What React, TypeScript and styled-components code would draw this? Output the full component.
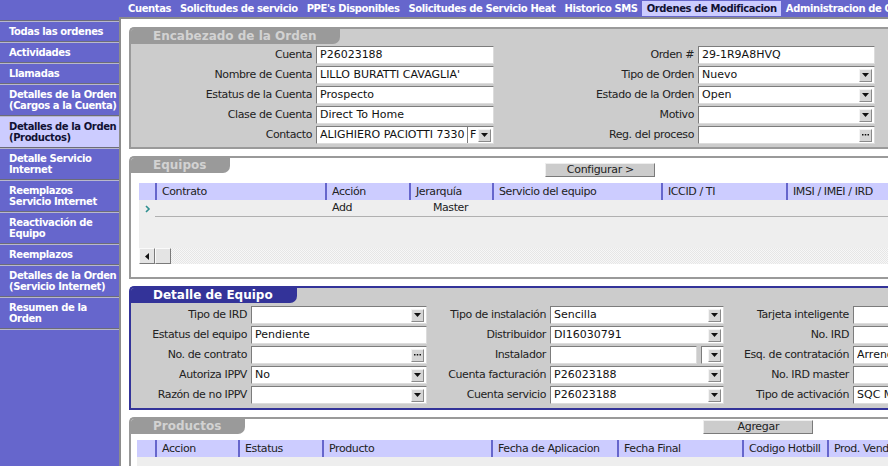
import React from "react";
import styled, { createGlobalStyle } from "styled-components";

const GlobalStyle = createGlobalStyle`
  html, body {
    margin: 0;
    padding: 0;
  }
  body {
    width: 888px;
    height: 466px;
    overflow: hidden;
    background: #6666cc;
    font-family: "DejaVu Sans", Verdana, sans-serif;
  }
`;

type FieldKind = "text" | "select" | "dots" | "contact" | "split";

interface FormField {
  label: string;
  value?: string;
  kind: FieldKind;
}

const navItems = [
  "Cuentas",
  "Solicitudes de servicio",
  "PPE's Disponibles",
  "Solicitudes de Servicio Heat",
  "Historico SMS",
  "Ordenes de Modificacion",
  "Administracion de Ordenes"
];

const sideItems = [
  ["Todas las ordenes"],
  ["Actividades"],
  ["Llamadas"],
  ["Detalles de la Orden", "(Cargos a la Cuenta)"],
  ["Detalles de la Orden", "(Productos)"],
  ["Detalle Servicio", "Internet"],
  ["Reemplazos", "Servicio Internet"],
  ["Reactivación de", "Equipo"],
  ["Reemplazos"],
  ["Detalles de la Orden", "(Servicio Internet)"],
  ["Resumen de la", "Orden"]
];

const headerRows: FormField[][] = [
  [
    { label: "Cuenta", value: "P26023188", kind: "text" },
    { label: "Orden #", value: "29-1R9A8HVQ", kind: "text" }
  ],
  [
    { label: "Nombre de Cuenta", value: "LILLO BURATTI CAVAGLIA'", kind: "text" },
    { label: "Tipo de Orden", value: "Nuevo", kind: "select" }
  ],
  [
    { label: "Estatus de la Cuenta", value: "Prospecto", kind: "text" },
    { label: "Estado de la Orden", value: "Open", kind: "select" }
  ],
  [
    { label: "Clase de Cuenta", value: "Direct To Home", kind: "text" },
    { label: "Motivo", kind: "select" }
  ],
  [
    { label: "Contacto", value: "ALIGHIERO PACIOTTI 7330", kind: "contact" },
    { label: "Reg. del proceso", kind: "dots" }
  ]
];

const detailRows: FormField[][] = [
  [
    { label: "Tipo de IRD", kind: "select" },
    { label: "Tipo de instalación", value: "Sencilla", kind: "select" },
    { label: "Tarjeta inteligente", kind: "text" }
  ],
  [
    { label: "Estatus del equipo", value: "Pendiente", kind: "text" },
    { label: "Distribuidor", value: "DI16030791", kind: "select" },
    { label: "No. IRD", kind: "text" }
  ],
  [
    { label: "No. de contrato", kind: "dots" },
    { label: "Instalador", kind: "split" },
    { label: "Esq. de contratación", value: "Arrendamiento", kind: "text" }
  ],
  [
    { label: "Autoriza IPPV", value: "No", kind: "select" },
    { label: "Cuenta facturación", value: "P26023188", kind: "select" },
    { label: "No. IRD master", kind: "text" }
  ],
  [
    { label: "Razón de no IPPV", kind: "select" },
    { label: "Cuenta servicio", value: "P26023188", kind: "select" },
    { label: "Tipo de activación", value: "SQC Masivo", kind: "text" }
  ]
];

const equipoCols = [
  { title: "Contrato", width: 170 },
  { title: "Acción", width: 84 },
  { title: "Jerarquía", width: 83 },
  { title: "Servicio del equipo", width: 169 },
  { title: "ICCID / TI", width: 125 },
  { title: "IMSI / IMEI / IRD", width: 200 }
];

const productoCols = [
  { title: "Accion", width: 83 },
  { title: "Estatus", width: 84 },
  { title: "Producto", width: 169 },
  { title: "Fecha de Aplicacion", width: 126 },
  { title: "Fecha Final", width: 125 },
  { title: "Codigo Hotbill", width: 85 },
  { title: "Prod. Vendido", width: 120 }
];

const Arrow: React.FC = () => (
  <svg width="7" height="4" viewBox="0 0 7 4">
    <polygon points="0,0 7,0 3.5,4" fill="#111" />
  </svg>
);

const Dots: React.FC = () => (
  <svg width="7" height="2" viewBox="0 0 7 2">
    <rect x="0" y="0" width="1.5" height="1.5" fill="#111" />
    <rect x="2.75" y="0" width="1.5" height="1.5" fill="#111" />
    <rect x="5.5" y="0" width="1.5" height="1.5" fill="#111" />
  </svg>
);

const FieldBox: React.FC<{ field: FormField }> = ({ field }) => {
  if (field.kind === "split") {
    return (
      <SplitWrap>
        <Field>
          <FieldText />
        </Field>
        <Field $narrow>
          <FieldText />
          <FieldButton>
            <Arrow />
          </FieldButton>
        </Field>
      </SplitWrap>
    );
  }
  return (
    <Field>
      <FieldText>{field.value}</FieldText>
      {field.kind === "contact" && <FieldCell>F</FieldCell>}
      {(field.kind === "select" || field.kind === "contact") && (
        <FieldButton>
          <Arrow />
        </FieldButton>
      )}
      {field.kind === "dots" && (
        <FieldButton>
          <Dots />
        </FieldButton>
      )}
    </Field>
  );
};

const App: React.FC = () => {
  return (
    <Shell>
      <GlobalStyle />
      <TopNav>
        {navItems.map(n => (
          <NavItem key={n} $active={n === "Ordenes de Modificacion"}>
            {n}
          </NavItem>
        ))}
      </TopNav>
      <Sidebar>
        {sideItems.map((lines, i) => (
          <SideItem key={i} $active={i === 4}>
            {lines.map(l => (
              <div key={l}>{l}</div>
            ))}
          </SideItem>
        ))}
      </Sidebar>
      <Main>
        <Panel $tone="gray" $fill="#cccccc">
          <PanelHead>
            <Tab $tone="gray">Encabezado de la Orden</Tab>
          </PanelHead>
          <HeaderForm>
            {headerRows.map(row =>
              row.map(f => (
                <React.Fragment key={f.label}>
                  <Label>{f.label}</Label>
                  <FieldBox field={f} />
                </React.Fragment>
              ))
            )}
          </HeaderForm>
        </Panel>

        <Panel $tone="gray" $fill="#ffffff">
          <PanelHead>
            <Tab $tone="gray">Equipos</Tab>
            <ActionButton $offset={315} $top={5}>
              Configurar &gt;
            </ActionButton>
          </PanelHead>
          <Grid $inset={8} $top={6}>
            <GridRow $cols={[16, ...equipoCols.map(c => c.width)]}>
              <HeadCell $first />
              {equipoCols.map(c => (
                <HeadCell key={c.title}>{c.title}</HeadCell>
              ))}
            </GridRow>
            <GridRow $cols={[16, ...equipoCols.map(c => c.width)]}>
              <Indicator>
                <svg width="6" height="8" viewBox="0 0 6 8">
                  <polyline
                    points="1,1 4,4 1,7"
                    fill="none"
                    stroke="#2e8f8f"
                    strokeWidth="1.6"
                  />
                </svg>
              </Indicator>
              <DataCell />
              <DataCell>Add</DataCell>
              <DataCell $center>Master</DataCell>
              <DataCell />
              <DataCell />
              <DataCell />
            </GridRow>
            <GridFiller />
            <Scrollbar>
              <ScrollButton>
                <svg width="4" height="7" viewBox="0 0 4 7">
                  <polygon points="4,0 4,7 0,3.5" fill="#111" />
                </svg>
              </ScrollButton>
              <ScrollButton />
              <ScrollTrack />
            </Scrollbar>
            <GridSpacer />
          </Grid>
        </Panel>

        <Panel $tone="blue" $fill="#cccccc">
          <PanelHead>
            <Tab $tone="blue">Detalle de Equipo</Tab>
          </PanelHead>
          <DetailForm>
            {detailRows.map(row =>
              row.map(f => (
                <React.Fragment key={f.label}>
                  <Label>{f.label}</Label>
                  <FieldBox field={f} />
                </React.Fragment>
              ))
            )}
          </DetailForm>
        </Panel>

        <Panel $tone="gray" $fill="#ffffff">
          <PanelHead>
            <Tab $tone="gray">Productos</Tab>
            <ActionButton $offset={458} $top={1}>
              Agregar
            </ActionButton>
          </PanelHead>
          <Grid $inset={6} $top={6}>
            <GridRow $cols={[18, ...productoCols.map(c => c.width)]}>
              <HeadCell $first />
              {productoCols.map(c => (
                <HeadCell key={c.title}>{c.title}</HeadCell>
              ))}
            </GridRow>
            <GridFiller />
          </Grid>
        </Panel>
      </Main>
    </Shell>
  );
};

export default App;

const Shell = styled.div`
  display: grid;
  grid-template-columns: 119px 769px;
  grid-template-rows: 17px 449px;
  width: 888px;
  height: 466px;
  background: #6666cc;
  overflow: hidden;
`;

const TopNav = styled.nav`
  grid-column: 2;
  grid-row: 1;
  display: flex;
  align-items: flex-start;
  padding: 1px 0 0 4px;
  white-space: nowrap;
  overflow: hidden;
`;

const NavItem = styled.span<{ $active?: boolean }>`
  padding: 0 4px 0 5px;
  height: 15px;
  font: bold 10px/15px "DejaVu Sans", Verdana, sans-serif;
  letter-spacing: -0.4px;
  color: ${p => (p.$active ? "#111133" : "#ffffff")};
  background: ${p => (p.$active ? "#ccccff" : "transparent")};
`;

const Sidebar = styled.aside`
  grid-column: 1;
  grid-row: 2;
  display: flex;
  flex-direction: column;
  align-self: start;
  padding-top: 3px;
  border-bottom: 2px groove #b8b8cc;
`;

const SideItem = styled.div<{ $active?: boolean }>`
  padding: 4px 9px;
  border-top: 2px groove #b8b8cc;
  font: bold 10px/11px "DejaVu Sans", Verdana, sans-serif;
  letter-spacing: -0.4px;
  white-space: nowrap;
  color: ${p => (p.$active ? "#111133" : "#ffffff")};
  background: ${p => (p.$active ? "#ccccff" : "transparent")};
`;

const Main = styled.main`
  grid-column: 2;
  grid-row: 2;
  background: #ffffff;
  border-top: 2px solid #8c8c8c;
  border-left: 2px solid #8c8c8c;
  padding: 8px 0 0 8px;
  overflow: hidden;
`;

const Panel = styled.section<{ $tone: "gray" | "blue"; $fill: string }>`
  width: 800px;
  margin-bottom: 7px;
  border: 2px solid ${p => (p.$tone === "blue" ? "#333399" : "#9a9a9a")};
  border-right: none;
  border-radius: 5px 0 0 0;
  background: ${p => p.$fill};
`;

const PanelHead = styled.div`
  display: flex;
  align-items: flex-start;
`;

const Tab = styled.div<{ $tone: "gray" | "blue" }>`
  height: 15px;
  padding: 0 24px 0 22px;
  border-radius: 3px 0 7px 0;
  font: bold 12px/15px "DejaVu Sans", Verdana, sans-serif;
  white-space: nowrap;
  color: ${p => (p.$tone === "blue" ? "#ffffff" : "#d2d2d2")};
  background: ${p => (p.$tone === "blue" ? "#333399" : "#9a9a9a")};
`;

const ActionButton = styled.div<{ $offset: number; $top: number }>`
  margin-left: ${p => p.$offset}px;
  margin-top: ${p => p.$top}px;
  width: 110px;
  height: 14px;
  box-sizing: border-box;
  background: #cccccc;
  border: 1px solid;
  border-color: #eeeeee #7a7a7a #7a7a7a #eeeeee;
  font: 11px/12px "DejaVu Sans", Verdana, sans-serif;
  letter-spacing: -0.3px;
  color: #222;
  text-align: center;
`;

const HeaderForm = styled.div`
  display: grid;
  grid-template-columns: 181px 178px 196px 177px;
  grid-auto-rows: 18px;
  column-gap: 4px;
  row-gap: 2px;
  padding: 2px 0 3px;
`;

const DetailForm = styled.div`
  display: grid;
  grid-template-columns: 116px 176px 115px 174px 121px 176px;
  grid-auto-rows: 18px;
  column-gap: 4px;
  row-gap: 2px;
  padding: 3px 0 4px;
`;

const Label = styled.span`
  font: 11px/18px "DejaVu Sans", Verdana, sans-serif;
  letter-spacing: -0.4px;
  color: #222;
  text-align: right;
  white-space: nowrap;
`;

const Field = styled.div<{ $narrow?: boolean }>`
  display: flex;
  align-items: center;
  height: 18px;
  box-sizing: border-box;
  ${p => (p.$narrow ? "width: 23px; flex: none;" : "flex: 1; min-width: 0;")}
  background: #ffffff;
  border: 1px solid;
  border-color: #7c7c7c #dcdcdc #dcdcdc #7c7c7c;
  padding: 0 2px 0 3px;
  font: 11px/16px "DejaVu Sans", Verdana, sans-serif;
  letter-spacing: 0;
  color: #111;
  overflow: hidden;
`;

const SplitWrap = styled.div`
  display: flex;
  gap: 4px;
  min-width: 0;
`;

const FieldText = styled.span`
  flex: 1;
  min-width: 0;
  white-space: nowrap;
  overflow: hidden;
`;

const FieldCell = styled.span`
  width: 8px;
  height: 16px;
  border-left: 1px solid #7c7c7c;
  padding-left: 2px;
  overflow: hidden;
`;

const FieldButton = styled.span`
  display: flex;
  align-items: center;
  justify-content: center;
  flex: none;
  width: 13px;
  height: 13px;
  box-sizing: border-box;
  background: #d6d6d6;
  border: 1px solid;
  border-color: #f4f4f4 #8a8a8a #8a8a8a #f4f4f4;
`;

const Grid = styled.div<{ $inset: number; $top: number }>`
  margin: ${p => p.$top}px 0 0 ${p => p.$inset}px;
  display: flex;
  flex-direction: column;
`;

const GridRow = styled.div<{ $cols: number[] }>`
  display: grid;
  grid-template-columns: ${p => p.$cols.map(c => `${c}px`).join(" ")};
  height: 17px;
`;

const HeadCell = styled.div<{ $first?: boolean }>`
  background: #ccccff;
  border-left: ${p => (p.$first ? "none" : "2px solid #6666cc")};
  padding-left: 5px;
  font: 11px/17px "DejaVu Sans", Verdana, sans-serif;
  letter-spacing: -0.4px;
  color: #222;
  white-space: nowrap;
  overflow: hidden;
`;

const Indicator = styled.div`
  background: #eeeeee;
  display: flex;
  align-items: center;
  padding-left: 6px;
`;

const DataCell = styled.div<{ $center?: boolean }>`
  background: #eeeeee;
  border-bottom: 1px solid #b0b0b0;
  padding-left: ${p => (p.$center ? "0" : "7px")};
  text-align: ${p => (p.$center ? "center" : "left")};
  font: 11px/16px "DejaVu Sans", Verdana, sans-serif;
  letter-spacing: -0.4px;
  color: #222;
  white-space: nowrap;
`;

const GridFiller = styled.div`
  height: 31px;
  background: #eeeeee;
`;

const Scrollbar = styled.div`
  display: flex;
  height: 16px;
`;

const ScrollButton = styled.div`
  width: 16px;
  height: 16px;
  box-sizing: border-box;
  display: flex;
  align-items: center;
  justify-content: center;
  background: #e4e4e4;
  border: 1px solid;
  border-color: #fafafa #7a7a7a #7a7a7a #fafafa;
`;

const ScrollTrack = styled.div`
  flex: 1;
  background: repeating-conic-gradient(#e6e6e6 0 25%, #f7f7f7 0 50%) 0 0 / 2px
    2px;
`;

const GridSpacer = styled.div`
  height: 13px;
`;
